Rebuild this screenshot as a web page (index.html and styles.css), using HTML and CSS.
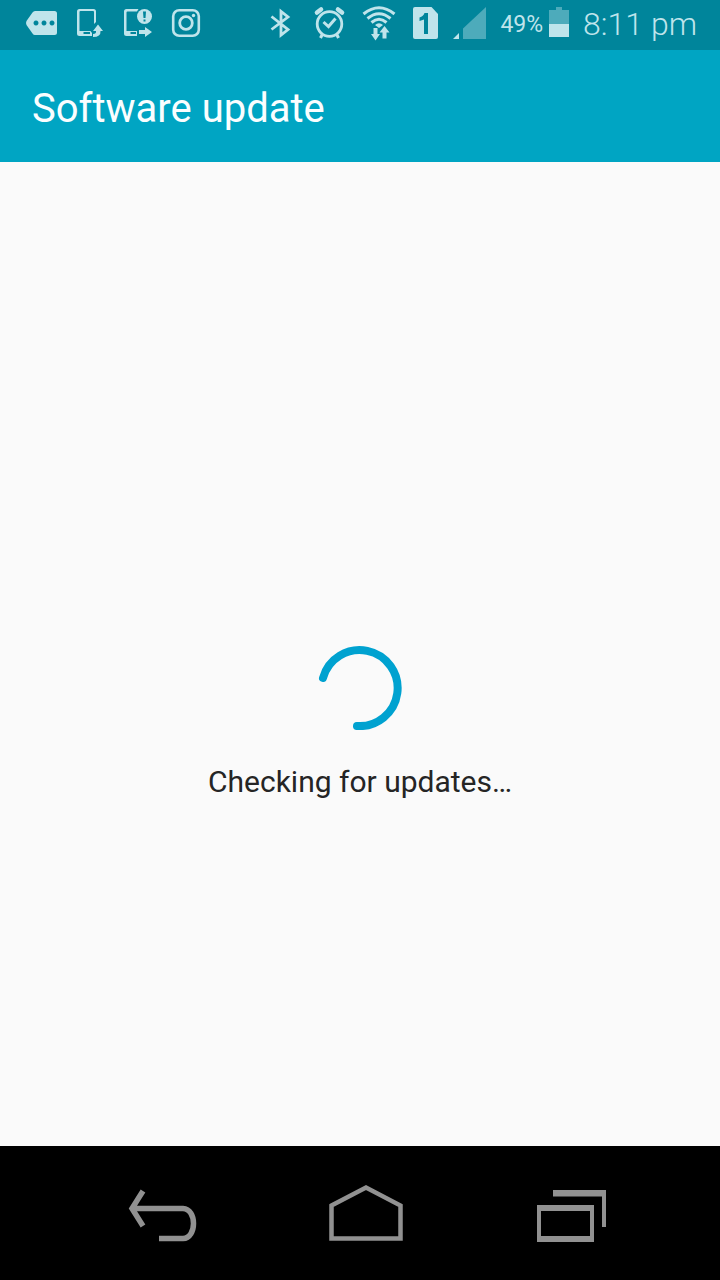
FILE: index.html
```html
<!DOCTYPE html>
<html lang="en">
<head>
<meta charset="utf-8">
<meta name="viewport" content="width=device-width, initial-scale=1">
<title>Software update</title>
<link rel="stylesheet" href="styles.css">
</head>
<body>
<div class="status-bar">
  <div class="notifications">
    <svg class="icon" viewBox="24 5 36 40" role="img" aria-label="More notifications">
      <path class="fill" fill-rule="evenodd" d="M35 11H54.500Q57 11 57 13.500V32.500Q57 35 54.500 35H35Q33.500 35 32.500 33.500L26.500 25Q25.500 23 26.500 21L32.500 12.500Q33.500 11 35 11ZM36 20.500a2.500 2.500 0 1 0 .01 0ZM44 20.500a2.500 2.500 0 1 0 .01 0ZM52 20.500a2.500 2.500 0 1 0 .01 0Z"/>
    </svg>
    <svg class="icon" viewBox="72 5 36 40" role="img" aria-label="Software update available">
      <path class="fill" fill-rule="evenodd" d="M79.500 9H93.500Q96 9 96 11.500V22L94 24V12Q94 11 93 11H80.500Q79.500 11 79.500 12V31H90.500L92 33V36H79.500Q77 36 77 33.500V11.500Q77 9 79.500 9ZM83.500 32V34H90V32Z"/>
      <path class="fill" d="M98 24.500L103 31H100.500Q101 37 93 37V34Q96.500 34 96 31H93Z"/>
    </svg>
    <svg class="icon" viewBox="120 5 36 40" role="img" aria-label="Device notice">
      <path class="fill" fill-rule="evenodd" d="M126.500 9H138.500L137 11.500H127.500Q126.500 11.500 126.500 12.500V31H137V36H126.500Q124 36 124 33.500V11.500Q124 9 126.500 9ZM130.500 32V34H136V32Z"/>
      <circle class="fill" cx="144.500" cy="16.500" r="7.500"/>
      <path class="cut" d="M143 11.500H146L145.500 18H143.500ZM143.500 19.500H145.500V21.500H143.500Z"/>
      <path class="fill" d="M139 30H145V27L152 32L145 37V34H139Z"/>
    </svg>
    <svg class="icon" viewBox="168 5 36 40" role="img" aria-label="Instagram">
      <rect class="line" x="173.200" y="10.200" width="25.600" height="25.600" rx="6" stroke-width="2.600"/>
      <circle class="line" cx="186" cy="23" r="6.300" stroke-width="2.800"/>
      <circle class="fill" cx="193.500" cy="15.500" r="1.700"/>
    </svg>
  </div>
  <div class="system">
    <svg class="icon" viewBox="264 5 36 40" role="img" aria-label="Bluetooth">
      <path class="line" stroke-width="2.800" d="M271.500 16.500L288 29.500L281 35V11.500L288 17L271.500 29.500"/>
    </svg>
    <svg class="icon" viewBox="312 5 36 40" role="img" aria-label="Alarm set">
      <circle class="line" cx="329.500" cy="24" r="12.300" stroke-width="2.800"/>
      <path class="line" stroke-width="3" d="M323.500 22L328.500 26.500L335.500 18.500M322.500 34L320.500 38M336.500 34L338.500 38"/>
      <path class="line" stroke-width="4.600" stroke-linecap="round" d="M317 12.500L321 9.500M342 12.500L338 9.500"/>
    </svg>
    <svg class="icon" viewBox="360 5 36 40" role="img" aria-label="Wi-Fi">
      <path class="line" stroke-width="3" d="M363.500 14Q379 1.500 394.500 14M367.500 18.500Q379 9 390.500 18.500M371.500 22.500Q379 16 386.500 22.500"/>
      <path class="fill" d="M375 25Q379 21.700 383 25L379 28ZM373.500 28H377.500V34H380L375.500 40.500L371 34H373.500ZM382.500 38.500H386.500V32.500H389.500L384.500 26L379.500 32.500H382.500Z"/>
    </svg>
    <svg class="icon icon-sim" viewBox="408 5 32 40" role="img" aria-label="SIM 1">
      <path class="fill" d="M415 7H431.500L438 14V37Q438 39 436 39H415Q413 39 413 37V9Q413 7 415 7Z"/>
      <path class="cut" d="M424.500 13H428V34H424V19.500L419.500 21V17.500Q423.500 16 424.500 13Z"/>
    </svg>
    <svg class="icon" viewBox="452 5 36 40" role="img" aria-label="Signal strength">
      <path class="dim" d="M463 39V28.500L486 7V39Z"/>
      <path class="fill" d="M453 39L459 33V39Z"/>
    </svg>
    <span class="percent">49%</span>
    <svg class="icon icon-battery" viewBox="549 5 20 40" role="img" aria-label="Battery">
      <path class="dim" d="M549 10H556V7H562V10H569V24H549Z"/>
      <path class="fill" d="M549 24H569V37H549Z"/>
    </svg>
    <time class="clock" datetime="20:11">8:11 pm</time>
  </div>
</div>
<header class="app-bar"><h1 class="title">Software update</h1></header>
<main class="content" role="status">
  <svg class="spinner" viewBox="0 0 84 84" aria-hidden="true">
    <path d="M5 32A38 38 0 1 1 39 80"/>
  </svg>
  <p class="message">Checking for updates…</p>
</main>
<nav class="nav-bar" aria-label="System navigation">
  <button class="nav-button" type="button" aria-label="Back">
    <svg class="nav-icon" viewBox="123 1183 80 64">
      <path stroke-width="5.500" d="M143 1191L132 1208.500L143 1226M133 1208.500H183C197 1209 197 1238 183 1238.500H159"/>
    </svg>
  </button>
  <button class="nav-button" type="button" aria-label="Home">
    <svg class="nav-icon" viewBox="327 1183 80 64">
      <path stroke-width="4.500" d="M331.500 1205.500L366 1187.500L400.500 1205.500V1238.500H331.500Z"/>
    </svg>
  </button>
  <button class="nav-button" type="button" aria-label="Recent apps">
    <svg class="nav-icon" viewBox="531 1183 80 64">
      <path class="solid" fill-rule="evenodd" d="M537 1205H594V1242H537ZM541 1211V1236H590V1211ZM553 1190H606V1227H602V1196.500H553Z"/>
    </svg>
  </button>
</nav>
</body>
</html>
```
FILE: styles.css
```css
* {
  box-sizing: border-box;
}

body {
  display: flex;
  flex-direction: column;
  min-height: 100vh;
  margin: 0;
  background: #fafafa;
  color: #252525;
  font-family: Roboto, "Noto Sans", sans-serif;
}

.status-bar {
  display: flex;
  align-items: center;
  justify-content: space-between;
  height: 50px;
  padding: 0 23px 0 24px;
  background: #00859b;
  color: #bfe4eb;
}

.notifications,
.system {
  display: flex;
  align-items: center;
  gap: 12px;
}

.icon {
  display: block;
  width: 36px;
  height: 40px;
}

.icon-sim {
  width: 32px;
}

.icon-battery {
  width: 20px;
  margin: 0 2px 0 -6px;
}

.fill {
  fill: #bfe4eb;
}

.dim {
  fill: #4dabbb;
}

.cut {
  fill: #00859b;
}

.line {
  fill: none;
  stroke: #bfe4eb;
}

.percent {
  font-size: 23px;
  line-height: 40px;
}

.clock {
  font-size: 32px;
  font-weight: 300;
  line-height: 38px;
  padding-bottom: 2px;
}

.app-bar {
  display: flex;
  align-items: center;
  height: 112px;
  padding: 6px 32px 0;
  background: #00a5c3;
  color: #fafeff;
}

.title {
  margin: 0;
  font-size: 40px;
  font-weight: 400;
  line-height: 48px;
}

.content {
  display: flex;
  flex: 1;
  flex-direction: column;
  align-items: center;
  justify-content: center;
  gap: 34px;
  padding-top: 138px;
}

.spinner {
  width: 84px;
  height: 84px;
}

.spinner path {
  fill: none;
  stroke: #00a2d0;
  stroke-width: 8;
  stroke-linecap: round;
}

.message {
  margin: 0;
  font-size: 30px;
  line-height: 36px;
}

.nav-bar {
  display: flex;
  height: 134px;
  padding: 0 47px 0 61px;
  background: #000;
}

.nav-button {
  display: flex;
  flex: 1;
  align-items: center;
  justify-content: center;
  padding: 4px 0 0;
  border: 0;
  background: none;
}

.nav-icon {
  width: 80px;
  height: 64px;
}

.nav-icon path {
  fill: none;
  stroke: #919191;
}

.nav-icon .solid {
  fill: #919191;
  stroke: none;
}
```
